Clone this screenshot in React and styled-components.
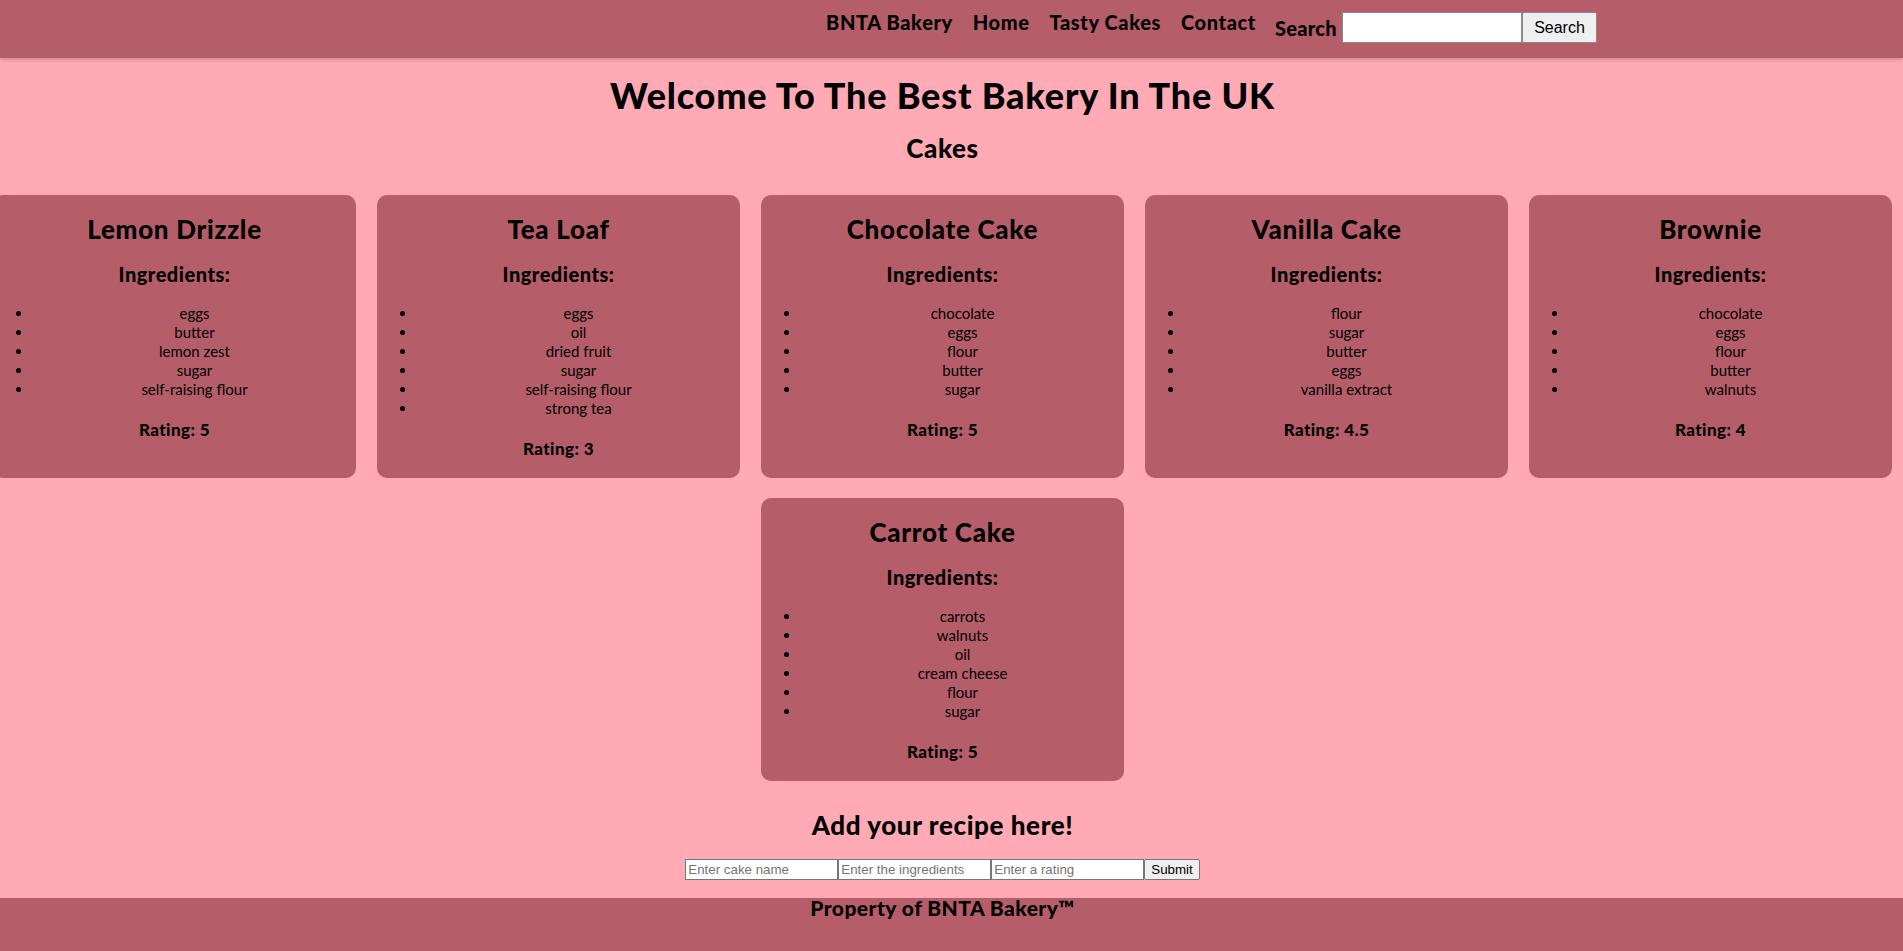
import styled, { createGlobalStyle } from 'styled-components';

const GlobalStyle = createGlobalStyle`
  html, body {
    margin: 0;
    padding: 0;
    background: #ffaab5;
    overflow-x: hidden;
  }
  body {
    font-family: Lato, "Open Sans", sans-serif;
    color: #000;
  }
`;

const cakes = [
  { name: 'Lemon Drizzle', ingredients: ['eggs', 'butter', 'lemon zest', 'sugar', 'self-raising flour'], rating: 5 },
  { name: 'Tea Loaf', ingredients: ['eggs', 'oil', 'dried fruit', 'sugar', 'self-raising flour', 'strong tea'], rating: 3 },
  { name: 'Chocolate Cake', ingredients: ['chocolate', 'eggs', 'flour', 'butter', 'sugar'], rating: 5 },
  { name: 'Vanilla Cake', ingredients: ['flour', 'sugar', 'butter', 'eggs', 'vanilla extract'], rating: 4.5 },
  { name: 'Brownie', ingredients: ['chocolate', 'eggs', 'flour', 'butter', 'walnuts'], rating: 4 },
  { name: 'Carrot Cake', ingredients: ['carrots', 'walnuts', 'oil', 'cream cheese', 'flour', 'sugar'], rating: 5 },
];

const NavBar = styled.nav`
  display: flex;
  justify-content: flex-end;
  align-items: flex-start;
  height: 58px;
  padding: 8px 306px 0 0;
  box-sizing: border-box;
  background: #b55d68;
  box-shadow: 0 2px 4px rgba(0, 0, 0, 0.18);
  position: relative;
`;

const NavLinks = styled.ul`
  display: flex;
  gap: 20px;
  list-style: none;
  margin: 0 19px 0 0;
  padding: 0;
`;

const NavLink = styled.a`
  font-size: 20px;
  font-weight: 900;
  letter-spacing: 0.6px;
  line-height: 28px;
  color: #000;
  text-decoration: none;
  cursor: pointer;
`;

const SearchForm = styled.form`
  display: flex;
  align-items: center;
  margin-top: 4px;
`;

const SearchLabel = styled.label`
  font-size: 20px;
  font-weight: 900;
  letter-spacing: 0.3px;
  margin-right: 5px;
`;

const SearchInput = styled.input`
  width: 180px;
  height: 31px;
  box-sizing: border-box;
  border: 1px solid #8a8a8a;
  background: #fff;
  padding: 0 4px;
  font-family: "Liberation Sans", Arial, sans-serif;
  font-size: 15px;
`;

const SearchButton = styled.button`
  width: 75px;
  height: 31px;
  box-sizing: border-box;
  border: 1px solid #8a8a8a;
  border-radius: 2px;
  background: #efefef;
  font-family: "Liberation Sans", Arial, sans-serif;
  font-size: 16px;
  color: #000;
`;

const Main = styled.main`
  padding-right: 18px;
  text-align: center;
`;

const Title = styled.h1`
  font-size: 36px;
  font-weight: 900;
  letter-spacing: 0.8px;
  line-height: 36px;
  margin: 19px 0 0;
`;

const SectionTitle = styled.h2`
  font-size: 26px;
  font-weight: 900;
  letter-spacing: 0.6px;
  line-height: 28px;
  margin: ${(p) => p.$margin || '20px 0'};
`;

const CardGrid = styled.div`
  display: flex;
  flex-wrap: wrap;
  justify-content: center;
  gap: 20px 21px;
  width: 1899px;
  margin: 33px 0 0 -7px;
`;

const Card = styled.section`
  width: 363px;
  background: #b55d68;
  border-radius: 10px;
  text-align: center;
`;

const CardTitle = styled.h2`
  font-size: 26px;
  font-weight: 900;
  letter-spacing: 0.7px;
  line-height: 28px;
  margin: 20px 0;
`;

const SubTitle = styled.h3`
  font-size: 20px;
  font-weight: 900;
  letter-spacing: 0.5px;
  line-height: 22px;
  margin: 0 0 18.7px;
`;

const IngredientList = styled.ul`
  margin: 0;
  padding-left: 40px;
`;

const Ingredient = styled.li`
  font-size: 15px;
  line-height: 19px;
  text-align: center;
`;

const Rating = styled.h4`
  font-size: 17px;
  font-weight: 900;
  letter-spacing: 0.4px;
  line-height: 19px;
  margin: 21px 0 20.5px;
`;

const RecipeForm = styled.form`
  display: flex;
  justify-content: center;
  margin-bottom: 18px;
`;

const RecipeInput = styled.input`
  width: 153px;
  height: 21px;
  box-sizing: border-box;
  border: 1px solid #767676;
  padding: 1px 2px;
  background: #fff;
  font-family: "Liberation Sans", Arial, sans-serif;
  font-size: 13.333px;

  &::placeholder {
    color: #757575;
  }
`;

const SubmitButton = styled.button`
  height: 21px;
  box-sizing: border-box;
  border: 1px solid #767676;
  border-radius: 2px;
  padding: 1px 6px;
  background: #efefef;
  font-family: "Liberation Sans", Arial, sans-serif;
  font-size: 13.333px;
  color: #000;
`;

const Footer = styled.footer`
  background: #b55d68;
  min-height: 60px;
  padding-right: 18px;
  text-align: center;
`;

const FooterText = styled.h3`
  margin: 0;
  font-size: 21px;
  font-weight: 900;
  letter-spacing: 0.45px;
  line-height: 20px;
`;

function CakeCard({ cake }) {
  return (
    <Card>
      <CardTitle>{cake.name}</CardTitle>
      <SubTitle>Ingredients:</SubTitle>
      <IngredientList>
        {cake.ingredients.map((item) => (
          <Ingredient key={item}>{item}</Ingredient>
        ))}
      </IngredientList>
      <Rating>Rating: {cake.rating}</Rating>
    </Card>
  );
}

export default function App() {
  return (
    <>
      <GlobalStyle />
      <NavBar>
        <NavLinks>
          <li><NavLink>BNTA Bakery</NavLink></li>
          <li><NavLink>Home</NavLink></li>
          <li><NavLink>Tasty Cakes</NavLink></li>
          <li><NavLink>Contact</NavLink></li>
        </NavLinks>
        <SearchForm onSubmit={(e) => e.preventDefault()}>
          <SearchLabel htmlFor="search">Search</SearchLabel>
          <SearchInput id="search" type="text" />
          <SearchButton type="submit">Search</SearchButton>
        </SearchForm>
      </NavBar>
      <Main>
        <Title>Welcome To The Best Bakery In The UK</Title>
        <SectionTitle $margin="21px 0 0">Cakes</SectionTitle>
        <CardGrid>
          {cakes.map((cake) => (
            <CakeCard key={cake.name} cake={cake} />
          ))}
        </CardGrid>
        <SectionTitle $margin="29.5px 0 20px">Add your recipe here!</SectionTitle>
        <RecipeForm onSubmit={(e) => e.preventDefault()}>
          <RecipeInput placeholder="Enter cake name" />
          <RecipeInput placeholder="Enter the ingredients" />
          <RecipeInput placeholder="Enter a rating" />
          <SubmitButton type="submit">Submit</SubmitButton>
        </RecipeForm>
      </Main>
      <Footer>
        <FooterText>Property of BNTA Bakery™</FooterText>
      </Footer>
    </>
  );
}
